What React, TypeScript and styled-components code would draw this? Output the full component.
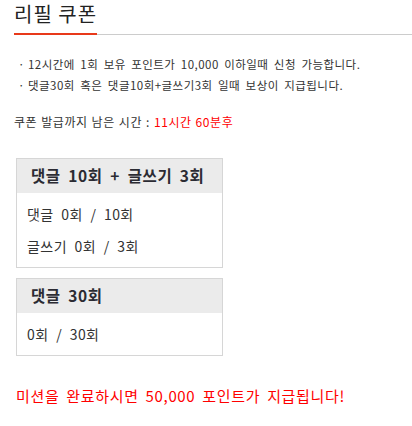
import React from "react";
import styled, { createGlobalStyle } from "styled-components";

const GlobalStyle = createGlobalStyle`
  html, body {
    margin: 0;
    padding: 0;
    background: #ffffff;
  }
  body {
    font-family: "Noto Sans CJK KR", "Noto Sans", sans-serif;
    color: #333333;
  }
  * { box-sizing: border-box; }
`;

const Page = styled.div`
  padding-left: 14px;
  width: 412px;
`;

const TitleBar = styled.div`
  display: flex;
  align-items: flex-end;
  border-bottom: 1px solid #cccccc;
`;

const TitleText = styled.h2`
  margin: 0 0 -1px 0;
  padding: 0 0 5px 0;
  font-size: 20px;
  font-weight: 400;
  line-height: 28px;
  letter-spacing: 1px;
  color: #222222;
  border-bottom: 2px solid #e8391a;
`;

const NoticeList = styled.ul`
  list-style: none;
  margin: 19px 0 0 4px;
  padding: 0;
`;

const NoticeItem = styled.li`
  display: flex;
  font-size: 11.5px;
  line-height: 21px;
  letter-spacing: 0.47px;
  word-spacing: 2.4px;
  color: #333333;
  white-space: nowrap;
`;

const Dot = styled.span`
  width: 10px;
  flex: none;
`;

const TimeLine = styled.p`
  margin: 15px 0 0 0;
  font-size: 12px;
  line-height: 22px;
  letter-spacing: 0.55px;
  word-spacing: 0.8px;
  color: #333333;
`;

const Red = styled.span`
  color: #ff0000;
`;

const MissionBox = styled.section<{ $first?: boolean }>`
  width: 207px;
  margin: ${(p) => (p.$first ? "25px" : "10px")} 0 0 2px;
  border: 1px solid #d6d6d6;
`;

const MissionHeader = styled.h3`
  margin: 0;
  height: 34px;
  padding: 0 0 2px 14px;
  background: #ebebeb;
  font-size: 15.5px;
  font-weight: 700;
  line-height: 32px;
  letter-spacing: 0.6px;
  word-spacing: 3.5px;
  color: #2b2b33;
  white-space: nowrap;
`;

const MissionBody = styled.div`
  padding: 5px 10px;
  background: #ffffff;
`;

const MissionRow = styled.div`
  font-size: 14px;
  line-height: 32px;
  letter-spacing: 0.45px;
  word-spacing: 4px;
  color: #333333;
`;

const RewardText = styled.p`
  margin: 29px 0 0 2px;
  font-size: 15px;
  line-height: 22px;
  letter-spacing: 0.65px;
  word-spacing: 3px;
  color: #ff0000;
  white-space: nowrap;
`;

type Mission = { title: string; rows: string[] };

const missions: Mission[] = [
  { title: "댓글 10회 + 글쓰기 3회", rows: ["댓글 0회 / 10회", "글쓰기 0회 / 3회"] },
  { title: "댓글 30회", rows: ["0회 / 30회"] },
];

const notices = [
  "12시간에 1회 보유 포인트가 10,000 이하일때 신청 가능합니다.",
  "댓글30회 혹은 댓글10회+글쓰기3회 일때 보상이 지급됩니다.",
];

export default function App() {
  return (
    <>
      <GlobalStyle />
      <Page>
        <TitleBar>
          <TitleText>리필 쿠폰</TitleText>
        </TitleBar>
        <NoticeList>
          {notices.map((n) => (
            <NoticeItem key={n}>
              <Dot>·</Dot>
              <span>{n}</span>
            </NoticeItem>
          ))}
        </NoticeList>
        <TimeLine>
          쿠폰 발급까지 남은 시간 : <Red>11시간 60분후</Red>
        </TimeLine>
        {missions.map((m, i) => (
          <MissionBox key={m.title} $first={i === 0}>
            <MissionHeader>{m.title}</MissionHeader>
            <MissionBody>
              {m.rows.map((r) => (
                <MissionRow key={r}>{r}</MissionRow>
              ))}
            </MissionBody>
          </MissionBox>
        ))}
        <RewardText>미션을 완료하시면 50,000 포인트가 지급됩니다!</RewardText>
      </Page>
    </>
  );
}
